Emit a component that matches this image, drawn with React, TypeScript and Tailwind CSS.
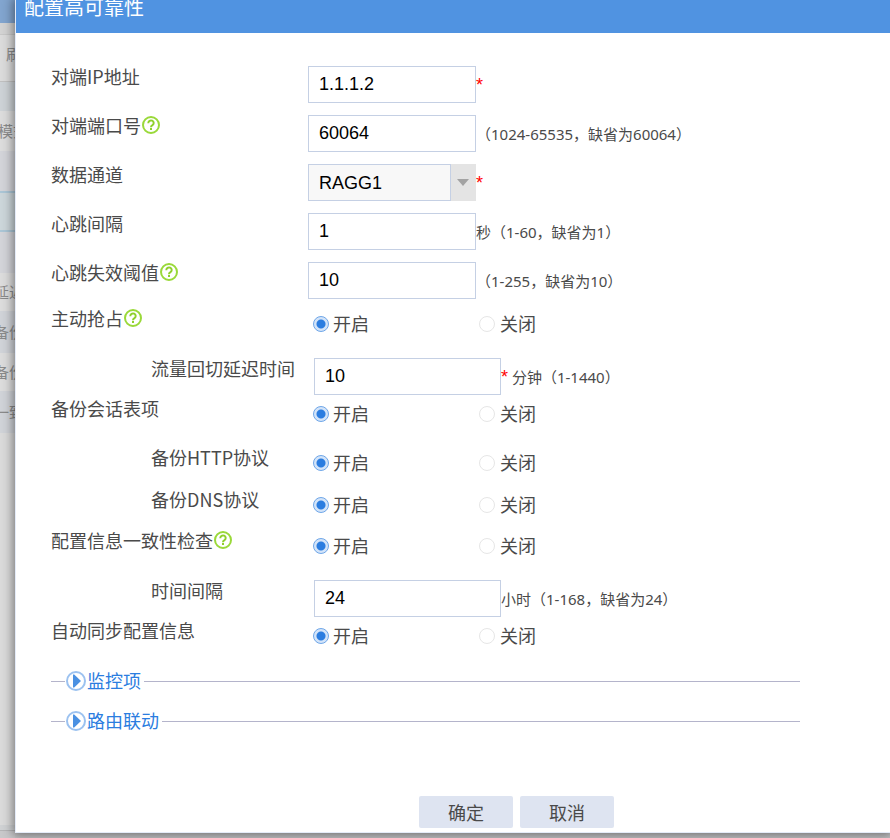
import { useState, type ReactNode } from "react";

const hintFont = "font-['Noto_Sans','Noto_Sans_CJK_SC',sans-serif]";

function HelpIcon() {
  return (
    <svg width="20" height="20" viewBox="0 0 20 20" fill="none" className="shrink-0" aria-hidden="true">
      <circle cx="10" cy="10" r="8" stroke="#9ad93a" strokeWidth="2" />
      <path d="M7.3 8.2a2.7 2.6 0 1 1 4.2 2c-1 .6-1.5 1-1.5 2.1" stroke="#8fd02c" strokeWidth="2" />
      <path d="M9 13h2v2H9z" fill="#8fd02c" />
    </svg>
  );
}

function Row({
  label,
  htmlFor,
  height,
  help,
  indent,
  children,
}: {
  label: string;
  htmlFor?: string;
  height: string;
  help?: boolean;
  indent?: boolean;
  children: ReactNode;
}) {
  return (
    <div className={`flex items-start ${height}`}>
      <div className={`flex w-[257px] shrink-0 items-center leading-5 ${indent ? "pl-[100px]" : ""}`}>
        {htmlFor ? <label htmlFor={htmlFor}>{label}</label> : <span>{label}</span>}
        {help && <HelpIcon />}
      </div>
      {children}
    </div>
  );
}

function TextField({ id, value, wide }: { id: string; value: string; wide?: boolean }) {
  return (
    <input
      id={id}
      type="text"
      defaultValue={value}
      className={`h-[37px] shrink-0 border border-[#c5d0e4] bg-white px-[10px] font-['Liberation_Sans',sans-serif] text-lg text-black outline-none ${
        wide ? "ml-[6px] w-[187px]" : "w-[168px]"
      }`}
    />
  );
}

function Star() {
  return <span className="font-['Liberation_Sans',sans-serif] text-lg leading-[38px] text-[#ff0000]">*</span>;
}

function Hint({ children }: { children: ReactNode }) {
  return <span className={`whitespace-pre pt-[9px] text-[15px] leading-5 ${hintFont}`}>{children}</span>;
}

function Switch({ name, label }: { name: string; label: string }) {
  const [on, setOn] = useState(true);
  const dot = "m-0 size-4 shrink-0 appearance-none rounded-full border";
  const active = "border-[#6ea6e8] bg-[radial-gradient(circle,#2b7de0_0,#2b7de0_4px,#d3e4f9_5px,#d3e4f9_100%)]";
  const idle = "border-[#e6e6e6] bg-white";
  return (
    <div role="radiogroup" aria-label={label} className="flex h-8 pl-[5px] leading-6">
      <label className="flex w-[166px] items-center gap-1">
        <input type="radio" name={name} checked={on} onChange={() => setOn(true)} className={`${dot} ${on ? active : idle}`} />
        <span className="pb-0.5">开启</span>
      </label>
      <label className="flex items-center gap-[5px]">
        <input type="radio" name={name} checked={!on} onChange={() => setOn(false)} className={`${dot} ${on ? idle : active}`} />
        <span className="pb-0.5">关闭</span>
      </label>
    </div>
  );
}

function Section({ title }: { title: string }) {
  return (
    <div className="mr-[90px] flex h-10 items-center">
      <span className="h-px w-[14px] bg-[#b4b4cb]" />
      <button type="button" className="flex items-center gap-px px-px leading-6 text-[#2b7de0]">
        <svg width="20" height="20" viewBox="0 0 20 20" aria-hidden="true">
          <circle cx="10" cy="10" r="9" fill="#fff" stroke="#9cc2f0" strokeWidth="2" />
          <path d="M7 3.5v13h1.2L15 10 8.200 3.5z" fill="#4a90e2" />
        </svg>
        <span className="pb-0.5">{title}</span>
      </button>
      <span className="ml-[2px] h-px flex-1 bg-[#b4b4cb]" />
    </div>
  );
}

function Backdrop() {
  const line = "flex items-center whitespace-nowrap";
  return (
    <aside className="flex w-[15px] shrink-0 flex-col overflow-hidden text-[15px] text-[#8a8a8a]">
      <div className="h-[23px] bg-[#82a5cf]" />
      <div className="h-3 border-b border-[#c8c8c8] bg-[#d3d3d3]" />
      <div className="h-[47px] whitespace-nowrap border-b border-[#c0c0c0] bg-[#dbdbdb] pl-[6px] leading-[38px]">刷新</div>
      <div className="h-[29px] bg-[#cdd2d6]" />
      <div className={`${line} -ml-0.5 h-10 bg-[#dcdcdc]`}>模式</div>
      <div className="h-10 bg-[#d3d4d9]" />
      <div className="h-[41px] border-y-2 border-[#abc6d6] bg-[#ccd6da]" />
      <div className="h-[41px] bg-[#d3d4d9]" />
      <div className={`${line} -ml-1.5 h-[38px] bg-[#dcdcdc]`}>延迟</div>
      <div className={`${line} -ml-1.5 h-[42px] bg-[#d0d3d8]`}>备份</div>
      <div className={`${line} -ml-1.5 h-[38px] bg-[#dcdcdc]`}>备份</div>
      <div className={`${line} -ml-1.5 h-[42px] bg-[#d0d3d8]`}>一致</div>
      <div className="flex-1 bg-[#dadada]" />
      <div className="h-[6px] border-b border-[#b4b4b6] bg-[#cfd1d3]" />
      <div className="h-[7px] bg-[#c8c8ca]" />
    </aside>
  );
}

export default function App() {
  return (
    <div className="flex min-h-screen overflow-hidden bg-[#c4c4c6] font-['Noto_Sans_CJK_SC',sans-serif] text-lg text-[#4a4a4a]">
      <Backdrop />
      <main className="mb-[5px] min-w-0 flex-1 border-b border-l border-[#e4ebf8] bg-white shadow-[0_0_10px_2px_rgba(0,0,0,0.45)]">
        <header className="h-[33px] bg-[#5093e1] pl-2 text-xl leading-[14px] text-white">
          <h1>配置高可靠性</h1>
        </header>
        <form className="pt-[33px] pl-[35px]" onSubmit={(e) => e.preventDefault()}>
          <Row label="对端IP地址" htmlFor="peer-ip" height="h-[49px]">
            <TextField id="peer-ip" value="1.1.1.2" />
            <Star />
          </Row>
          <Row label="对端端口号" htmlFor="peer-port" height="h-[49px]" help>
            <TextField id="peer-port" value="60064" />
            <Hint>（1024-65535，缺省为60064）</Hint>
          </Row>
          <Row label="数据通道" htmlFor="channel" height="h-[49px]">
            <div className="relative w-[168px] shrink-0">
              <select
                id="channel"
                className="block h-[37px] w-full appearance-none border border-[#c5d0e4] bg-[#f8f8f8] pr-[26px] pl-[10px] font-['Liberation_Sans',sans-serif] text-lg text-black outline-none"
              >
                <option>RAGG1</option>
              </select>
              <span className="pointer-events-none absolute inset-y-0 right-0 flex w-[26px] items-center justify-center border-l border-[#c5d0e4] bg-[#e4e4e4] pr-0.5">
                <svg width="12" height="7" viewBox="0 0 12 7" aria-hidden="true">
                  <path d="M0 0h12L6 7z" fill="#a3a3a3" />
                </svg>
              </span>
            </div>
            <Star />
          </Row>
          <Row label="心跳间隔" htmlFor="heartbeat" height="h-[49px]">
            <TextField id="heartbeat" value="1" />
            <Hint>秒（1-60，缺省为1）</Hint>
          </Row>
          <Row label="心跳失效阈值" htmlFor="threshold" height="h-[46px]" help>
            <TextField id="threshold" value="10" />
            <Hint>（1-255，缺省为10）</Hint>
          </Row>
          <Row label="主动抢占" height="h-[50px]" help>
            <Switch name="preempt" label="主动抢占" />
          </Row>
          <Row label="流量回切延迟时间" htmlFor="delay" height="h-10" indent>
            <TextField id="delay" value="10" wide />
            <Star />
            <Hint> 分钟（1-1440）</Hint>
          </Row>
          <Row label="备份会话表项" height="h-[49px]">
            <Switch name="session" label="备份会话表项" />
          </Row>
          <Row label="备份HTTP协议" height="h-[42px]" indent>
            <Switch name="http" label="备份HTTP协议" />
          </Row>
          <Row label="备份DNS协议" height="h-[41px]" indent>
            <Switch name="dns" label="备份DNS协议" />
          </Row>
          <Row label="配置信息一致性检查" height="h-[50px]" help>
            <Switch name="consistency" label="配置信息一致性检查" />
          </Row>
          <Row label="时间间隔" htmlFor="interval" height="h-10" indent>
            <TextField id="interval" value="24" wide />
            <Hint>小时（1-168，缺省为24）</Hint>
          </Row>
          <Row label="自动同步配置信息" height="h-[41px]">
            <Switch name="sync" label="自动同步配置信息" />
          </Row>
          <Section title="监控项" />
          <Section title="路由联动" />
          <div className="mt-[55px] mb-[4px] flex gap-[7px] pl-[368px]">
            <button type="submit" className="h-8 w-[94px] rounded-xs bg-[#dee4f1]">
              确定
            </button>
            <button type="button" className="h-8 w-[94px] rounded-xs bg-[#dee4f1]">
              取消
            </button>
          </div>
        </form>
      </main>
    </div>
  );
}
